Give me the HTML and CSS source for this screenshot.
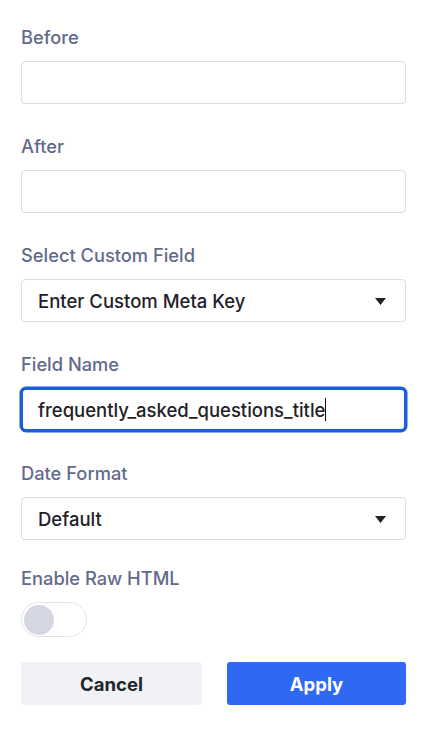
FILE: index.html
```html
<!DOCTYPE html>
<html lang="en">
<head>
<meta charset="utf-8">
<title>Field settings</title>
<link rel="stylesheet" href="styles.css">
</head>
<body>
<form class="panel">
  <div class="field">
    <label class="label">Before</label>
    <div class="control"></div>
  </div>
  <div class="field">
    <label class="label">After</label>
    <div class="control"></div>
  </div>
  <div class="field">
    <label class="label">Select Custom Field</label>
    <div class="control select">
      <span class="value">Enter Custom Meta Key</span>
      <svg class="arrow" width="11" height="7" viewBox="0 0 11 7"><path d="M0 0H11L5.5 7Z" fill="#222"/></svg>
    </div>
  </div>
  <div class="field">
    <label class="label">Field Name</label>
    <div class="control focused">
      <span class="value">frequently_asked_questions_title</span><span class="caret"></span>
    </div>
  </div>
  <div class="field">
    <label class="label">Date Format</label>
    <div class="control select">
      <span class="value">Default</span>
      <svg class="arrow" width="11" height="7" viewBox="0 0 11 7"><path d="M0 0H11L5.5 7Z" fill="#222"/></svg>
    </div>
  </div>
  <div class="field field-toggle">
    <label class="label">Enable Raw HTML</label>
    <div class="toggle"><span class="knob"></span></div>
  </div>
  <div class="actions">
    <button type="button" class="btn btn-cancel">Cancel</button>
    <button type="button" class="btn btn-apply">Apply</button>
  </div>
</form>
</body>
</html>
```
FILE: styles.css
```css
* { box-sizing: border-box; }
html, body { margin: 0; padding: 0; background: #ffffff; }
body {
  font-family: Inter, "Noto Sans", "DejaVu Sans", sans-serif;
  -webkit-font-smoothing: antialiased;
}
.panel {
  padding: 26px 23px 0 21px;
  display: flex;
  flex-direction: column;
}
.field {
  display: flex;
  flex-direction: column;
  margin-bottom: 31px;
}
.label {
  font-size: 18.3px;
  line-height: 22px;
  font-weight: 500;
  color: #636a8b;
  margin-bottom: 13px;
}
.control {
  height: 43px;
  border: 1px solid #d9dce2;
  border-radius: 4px;
  background: #fff;
  display: flex;
  align-items: center;
  padding: 0 15px 0 16px;
}
.value {
  font-size: 18.5px;
  font-weight: 500;
  color: #1f2228;
  white-space: nowrap;
}
.select { justify-content: space-between; }
.arrow { margin-right: 4px; margin-top: 1px; }
.focused {
  border: 2px solid #1c5fd9;
  box-shadow: 0 0 0 1.5px #1c5fd9;
  border-radius: 5px;
  padding-left: 15px;
}
.caret {
  display: inline-block;
  width: 1px;
  height: 23px;
  background: #111;
}
.field-toggle { margin-top: -4px; margin-bottom: 25px; }
.field-toggle .label { margin-bottom: 13px; }
.toggle {
  width: 66px;
  height: 35px;
  border: 1.5px solid #e2e4e9;
  border-radius: 18px;
  background: #fff;
  display: flex;
  align-items: center;
  padding-left: 2px;
}
.knob {
  width: 30px;
  height: 30px;
  border-radius: 50%;
  background: #d4d7e1;
}
.actions {
  display: grid;
  grid-template-columns: 181px 179px;
  column-gap: 25px;
}
.btn {
  height: 43px;
  border: none;
  border-radius: 3px;
  font-family: inherit;
  font-size: 18.5px;
  font-weight: 700;
}
.btn-cancel { background: #f1f2f5; color: #23262b; }
.btn-apply { background: #2f68f2; color: #fff; }
```
